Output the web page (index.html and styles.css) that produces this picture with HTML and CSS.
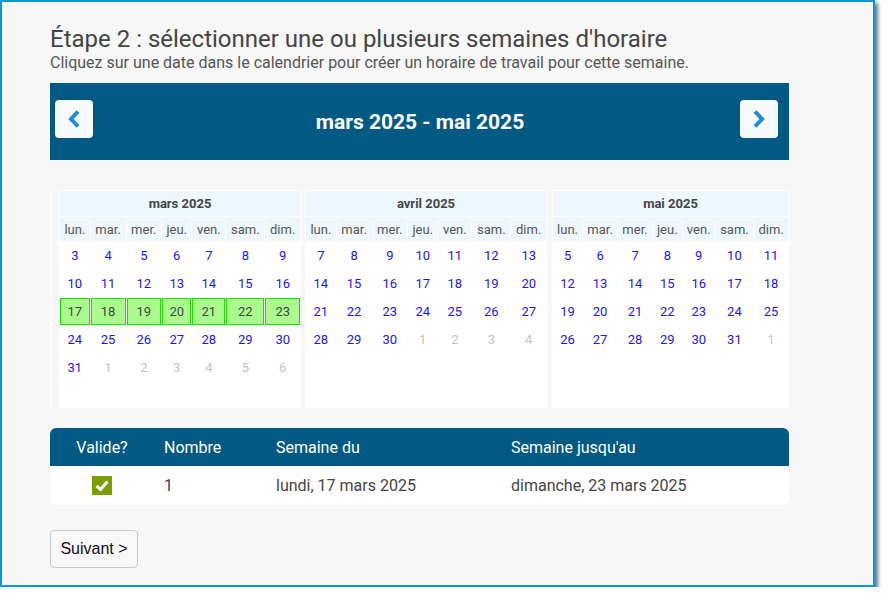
FILE: index.html
```html
<!DOCTYPE html>
<html lang="fr">
<head>
<meta charset="utf-8">
<title>Étape 2</title>
<link rel="stylesheet" href="styles.css">
</head>
<body>
<div class="frame">
  <h1 class="title">Étape 2 : sélectionner une ou plusieurs semaines d'horaire</h1>
  <p class="subtitle">Cliquez sur une date dans le calendrier pour créer un horaire de travail pour cette semaine.</p>

  <div class="nav">
    <button class="nav-btn" aria-label="précédent">
      <svg width="14" height="20" viewBox="0 0 14 20"><polyline points="11,2.5 4,10 11,17.5" fill="none" stroke="#1d8cd6" stroke-width="4" stroke-linejoin="miter"/></svg>
    </button>
    <div class="nav-title">mars 2025 - mai 2025</div>
    <button class="nav-btn" aria-label="suivant">
      <svg width="14" height="20" viewBox="0 0 14 20"><polyline points="3,2.5 10,10 3,17.5" fill="none" stroke="#1d8cd6" stroke-width="4" stroke-linejoin="miter"/></svg>
    </button>
  </div>

  <div class="calendars">
    <div class="stripe"></div>
    <div class="month">
      <table class="cal">
        <tr><th colspan="7" class="mname">mars 2025</th></tr>
        <tr class="wd"><td>lun.</td><td>mar.</td><td>mer.</td><td>jeu.</td><td>ven.</td><td>sam.</td><td>dim.</td></tr>
        <tr><td>3</td><td>4</td><td>5</td><td>6</td><td>7</td><td>8</td><td>9</td></tr>
        <tr><td>10</td><td>11</td><td>12</td><td>13</td><td>14</td><td>15</td><td>16</td></tr>
        <tr class="sel"><td>17</td><td>18</td><td>19</td><td>20</td><td>21</td><td>22</td><td>23</td></tr>
        <tr><td>24</td><td>25</td><td>26</td><td>27</td><td>28</td><td>29</td><td>30</td></tr>
        <tr><td>31</td><td class="o">1</td><td class="o">2</td><td class="o">3</td><td class="o">4</td><td class="o">5</td><td class="o">6</td></tr>
        <tr><td></td><td></td><td></td><td></td><td></td><td></td><td></td></tr>
      </table>
    </div>
    <div class="month">
      <table class="cal">
        <tr><th colspan="7" class="mname">avril 2025</th></tr>
        <tr class="wd"><td>lun.</td><td>mar.</td><td>mer.</td><td>jeu.</td><td>ven.</td><td>sam.</td><td>dim.</td></tr>
        <tr><td>7</td><td>8</td><td>9</td><td>10</td><td>11</td><td>12</td><td>13</td></tr>
        <tr><td>14</td><td>15</td><td>16</td><td>17</td><td>18</td><td>19</td><td>20</td></tr>
        <tr><td>21</td><td>22</td><td>23</td><td>24</td><td>25</td><td>26</td><td>27</td></tr>
        <tr><td>28</td><td>29</td><td>30</td><td class="o">1</td><td class="o">2</td><td class="o">3</td><td class="o">4</td></tr>
        <tr><td></td><td></td><td></td><td></td><td></td><td></td><td></td></tr>
        <tr><td></td><td></td><td></td><td></td><td></td><td></td><td></td></tr>
      </table>
    </div>
    <div class="month last">
      <table class="cal">
        <tr><th colspan="7" class="mname">mai 2025</th></tr>
        <tr class="wd"><td>lun.</td><td>mar.</td><td>mer.</td><td>jeu.</td><td>ven.</td><td>sam.</td><td>dim.</td></tr>
        <tr><td>5</td><td>6</td><td>7</td><td>8</td><td>9</td><td>10</td><td>11</td></tr>
        <tr><td>12</td><td>13</td><td>14</td><td>15</td><td>16</td><td>17</td><td>18</td></tr>
        <tr><td>19</td><td>20</td><td>21</td><td>22</td><td>23</td><td>24</td><td>25</td></tr>
        <tr><td>26</td><td>27</td><td>28</td><td>29</td><td>30</td><td>31</td><td class="o">1</td></tr>
        <tr><td></td><td></td><td></td><td></td><td></td><td></td><td></td></tr>
        <tr><td></td><td></td><td></td><td></td><td></td><td></td><td></td></tr>
      </table>
    </div>
  </div>

  <table class="weeks">
    <thead>
      <tr><th class="c1">Valide?</th><th class="c2">Nombre</th><th class="c3">Semaine du</th><th class="c4">Semaine jusqu'au</th></tr>
    </thead>
    <tbody>
      <tr>
        <td class="c1"><svg class="check" width="20" height="19" viewBox="0 0 20 19"><rect width="20" height="19" fill="#789e00"/><polyline points="4.5,10 8.5,13.5 15.5,5.5" fill="none" stroke="#fff" stroke-width="3"/></svg></td>
        <td class="c2">1</td>
        <td class="c3">lundi, 17 mars 2025</td>
        <td class="c4">dimanche, 23 mars 2025</td>
      </tr>
    </tbody>
  </table>

  <button class="next">Suivant &gt;</button>
</div>
</body>
</html>
```

FILE: styles.css
```css
html, body {
  margin: 0;
  padding: 0;
  background: #ffffff;
}

.frame {
  box-sizing: border-box;
  width: 875px;
  height: 587px;
  border: 2px solid #0a97d6;
  background: #f7f7f7;
  box-shadow: 3px 3px 4px rgba(0, 0, 0, 0.55);
  padding: 23px 0 0 48px;
  font-family: Roboto, "Liberation Sans", sans-serif;
}

.title {
  margin: 0;
  font-size: 24px;
  line-height: 28px;
  font-weight: 400;
  color: #444;
}

.subtitle {
  margin: 1px 0 0;
  font-size: 16px;
  line-height: 18px;
  color: #555;
}

.nav {
  margin-top: 11px;
  width: 739px;
  height: 77px;
  box-sizing: border-box;
  background: #025a84;
  display: grid;
  grid-template-columns: 38px 1fr 38px;
  align-items: center;
  padding: 0 11px 0 5px;
}

.nav-btn {
  width: 38px;
  height: 38px;
  margin-bottom: 5px;
  border: none;
  border-radius: 4px;
  background: #f8f9fa;
  padding: 0;
  display: flex;
  align-items: center;
  justify-content: center;
}

.nav-title {
  text-align: center;
  padding-left: 7px;
  color: #fff;
  font-weight: 700;
  font-size: 21px;
}

.calendars {
  margin-top: 30px;
  width: 739px;
  display: flex;
  align-items: flex-start;
  gap: 4px;
}

.stripe {
  width: 2px;
  height: 218px;
  background: #fdfdfd;
  margin-right: 3px;
}

.month {
  flex: 0 0 242px;
  height: 218px;
  background: #fff;
  overflow: hidden;
}

.month.last {
  flex: 1 1 auto;
  margin-left: 1px;
}

.cal {
  width: 100%;
  border-collapse: separate;
  border-spacing: 1px;
  font-size: 13px;
  text-align: center;
}

.cal td, .cal th {
  padding: 0 3px;
  height: 27px;
}

.cal .mname {
  height: 25px;
  background: #eef7fe;
  color: #444;
  font-weight: 700;
}

.cal .wd td {
  height: 24px;
  background: #eef7fe;
  color: #555;
}

.cal td {
  color: #2414f0;
  box-sizing: border-box;
}

.cal td.o {
  color: #c2c2c2;
}

.cal .sel td {
  background: #a9fb8d;
  border: 1px solid #22dd00;
  color: #444;
}

.weeks {
  margin-top: 20px;
  width: 739px;
  border-collapse: separate;
  border-spacing: 0;
  font-size: 16px;
  text-align: left;
}

.weeks th {
  background: #025a84;
  color: #fff;
  font-weight: 400;
  height: 38px;
  padding: 0 0 0 10px;
}

.weeks th:first-child { border-top-left-radius: 6px; }
.weeks th:last-child { border-top-right-radius: 6px; }

.weeks td {
  background: #fff;
  color: #444;
  height: 39px;
  padding: 0 0 0 10px;
}

.weeks td:first-child { border-bottom-left-radius: 6px; }
.weeks td:last-child { border-bottom-right-radius: 6px; }

.weeks .c1 { width: 104px; text-align: center; padding: 0; }
.weeks .c2 { width: 102px; }
.weeks .c3 { width: 225px; }

.check {
  display: block;
  margin: 0 auto;
}

.next {
  margin-top: 25px;
  width: 88px;
  height: 38px;
  border: 1px solid #c9c9c9;
  border-radius: 4px;
  background: #f8f8f8;
  color: #111;
  font-family: "Liberation Sans", Arial, sans-serif;
  font-size: 16px;
  padding: 0;
}
```
